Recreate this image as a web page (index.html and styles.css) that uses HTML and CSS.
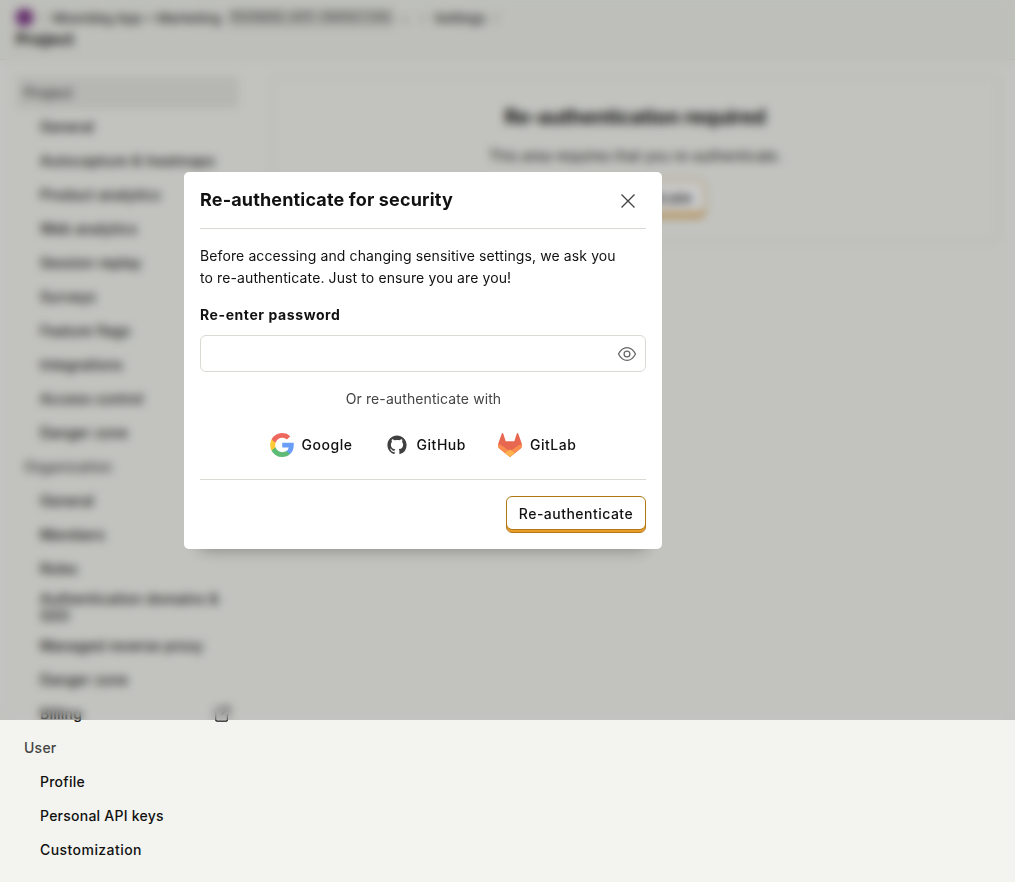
FILE: index.html
```html
<!DOCTYPE html>
<html lang="en">
<head>
<meta charset="utf-8">
<title>Settings</title>
<link rel="stylesheet" href="styles.css">
</head>
<body>
<header class="topbar">
  <div class="crumbs">
    <span class="avatar"></span><span class="sep first">/</span>
    <span class="crumb project-name">Moonbbg App + Marketing</span>
    <span class="tag">MOONBBG-APP MARKETING</span>
    <span class="chevron">⌄</span><span class="sep second">/</span>
    <span class="crumb settings">Settings</span><span class="sep">/</span>
  </div>
  <h1>Project</h1>
</header>
<div class="layout">
  <nav class="sidebar">
    <a class="group active">Project</a>
    <a>General</a><a class="wide">Autocapture &amp; heatmaps</a><a>Product analytics</a><a>Web analytics</a><a>Session replay</a><a>Surveys</a><a>Feature flags</a><a>Integrations</a><a>Access control</a><a>Danger zone</a>
    <a class="group">Organization</a>
    <a>General</a><a>Members</a><a>Roles</a><a class="tall">Authentication domains &amp; SSO</a><a>Managed reverse proxy</a><a>Danger zone</a>
    <a>Billing
      <svg class="external" viewBox="0 0 20 20" fill="none" stroke="currentColor" stroke-width="1.4"><path d="M10 4H4.500Q3 4 3 5.500V16.500Q3 18 4.500 18H14.500Q16 18 16 16.500V10M12 2.500H17.500V8M17.500 2.500L9.500 10.500"/></svg>
    </a>
    <a class="group">User</a>
    <a>Profile</a><a>Personal API keys</a><a class="wide">Customization</a>
  </nav>
  <main class="panel">
    <h2>Re-authentication required</h2>
    <p>This area requires that you re-authenticate.</p>
    <button class="button">Re-authenticate</button>
  </main>
</div>
<div class="overlay">
  <section class="modal" role="dialog" aria-labelledby="modal-title">
    <div class="modal-header">
      <h3 id="modal-title">Re-authenticate for security</h3>
      <svg class="close" viewBox="0 0 24 24" fill="none" stroke="currentColor" stroke-width="1.600"><path d="M4.200 4.200l15.600 15.600M19.800 4.200L4.200 19.800"/></svg>
    </div>
    <div class="modal-body">
      <p class="description">Before accessing and changing sensitive settings, we ask you to re-authenticate. Just to ensure you are you!</p>
      <label for="password">Re-enter password</label>
      <div class="field">
        <input id="password" type="password">
        <svg class="eye" viewBox="0 0 24 24" fill="none" stroke="currentColor" stroke-width="1.500"><path d="M1.800 12C4.200 7.200 7.600 4.300 12 4.300S19.800 7.200 22.200 12C19.800 16.800 16.400 19.700 12 19.700S4.200 16.800 1.800 12Z"/><circle cx="12" cy="12" r="3.500"/></svg>
      </div>
      <div class="or">Or re-authenticate with</div>
      <div class="providers">
        <span class="provider"><svg viewBox="0 0 24 24"><path fill="#6a9df8" d="M23.760 9.820H12.240v4.640h6.460a5.520 5.520 0 0 1-2.400 3.620v3.010h3.880c2.270-2.090 3.580-5.170 3.580-8.820 0-.850-.080-1.670 0-2.450Z"/><path fill="#5dbb76" d="M12.240 24c3.240 0 5.960-1.070 7.940-2.910l-3.880-3.010c-1.080.720-2.450 1.150-4.060 1.150-3.130 0-5.780-2.110-6.720-4.950H1.510v3.110A12 12 0 0 0 12.240 24Z"/><path fill="#fcca37" d="M5.520 14.280a7.200 7.200 0 0 1 0-4.560V6.610H1.510a12 12 0 0 0 0 10.780l4.010-3.110Z"/><path fill="#ef685d" d="M12.240 4.770c1.760 0 3.350.610 4.600 1.800l3.440-3.440A11.540 11.540 0 0 0 12.240 0 12 12 0 0 0 1.510 6.610l4.010 3.110c.940-2.840 3.590-4.950 6.720-4.950Z"/></svg>Google</span>
        <span class="provider"><svg viewBox="-2 -2 20 20"><path fill="#404040" fill-rule="evenodd" d="M8 0C3.580 0 0 3.580 0 8c0 3.540 2.290 6.530 5.470 7.590.4.070.55-.17.55-.38 0-.19-.01-.82-.01-1.490-2.010.37-2.530-.49-2.690-.94-.09-.23-.48-.94-.82-1.130-.28-.15-.68-.52-.01-.53.63-.01 1.080.58 1.230.82.72 1.210 1.870.87 2.330.66.07-.52.28-.87.51-1.070-1.780-.2-3.640-.89-3.640-3.950 0-.87.31-1.590.82-2.150-.08-.2-.36-1.020.08-2.120 0 0 .67-.21 2.200.82A7.650 7.650 0 0 1 8 3.860c.68 0 1.360.09 2 .27 1.530-1.040 2.200-.82 2.200-.82.44 1.100.16 1.920.08 2.120.51.56.82 1.270.82 2.150 0 3.070-1.870 3.750-3.650 3.950.29.25.54.73.54 1.480 0 1.070-.01 1.930-.01 2.200 0 .21.15.46.55.38A8.010 8.010 0 0 0 16 8c0-4.420-3.580-8-8-8Z"/></svg>GitHub</span>
        <span class="provider"><svg viewBox="0 0 24 24"><path fill="#e86750" d="M23.900 11 20.200.6c-.3-.8-1.100-.8-1.400 0l-2.500 7.700H7.700L5.200.6C4.900-.2 4.100-.2 3.800.6L.1 11c-.4 2 .2 3.500 1.500 4.700L12 24l10.400-8.300c1.300-1.200 1.900-2.700 1.500-4.700Z"/><path fill="#fa8c4e" d="M.1 11c-.3 2 .1 3.500 1.500 4.700L12 24l10.400-8.300c1.400-1.200 1.800-2.700 1.500-4.700-1.600.3-3 .9-4.400 1.900L12 18.300l-7.500-5.400A11 11 0 0 0 .1 11Z"/><path fill="#fdb24e" d="m12 16.500 5.100 3.400L12 24l-5.100-4.100 5.100-3.400Z"/></svg>GitLab</span>
      </div>
    </div>
    <div class="modal-footer"><button class="button">Re-authenticate</button></div>
  </section>
</div>
</body>
</html>
```
FILE: styles.css
```css
* { box-sizing: border-box; }
html { height: 882px; overflow: hidden; }
body { margin: 0; height: 882px; overflow: hidden; background: #f3f4ef; color: #111; font: 14px/20px Inter, sans-serif; }
h1, h2, h3, p { margin: 0; }
.topbar { height: 60px; padding: 7px 16px 0; background: #eeefe9; border-bottom: 1px solid #dadbd2; }
.crumbs { display: flex; align-items: center; height: 21px; font-size: 13px; font-weight: 600; color: #444; white-space: nowrap; }
.avatar { width: 17px; height: 17px; border-radius: 6px; background: #7e3c88; }
.sep { color: #888; font-weight: 400; }
.first { margin-left: 8px; }
.crumb { font-size: 13px; }
.project-name { width: 169px; margin-left: 7px; }
.tag { width: 166px; height: 18px; margin-left: 6px; padding: 0 3px; overflow: hidden; border-radius: 3px; background: #d2d3cd; color: #666; font: 500 12px/18px "Liberation Mono", monospace; letter-spacing: .4px; }
.chevron { margin-left: 7px; font-size: 10px; }
.second { margin-left: 12px; }
.settings { margin: 0 8px 0 9px; }
h1 { font-size: 16px; line-height: 22px; font-weight: 700; letter-spacing: .35px; }
.layout { display: flex; align-items: flex-start; gap: 32px; padding: 16px; }
.sidebar { display: flex; flex-direction: column; flex: 0 0 223px; gap: 1px; letter-spacing: .24px; }
.sidebar a { display: flex; align-items: center; justify-content: space-between; min-height: 33px; padding: 0 8px 0 24px; border-radius: 4px; font-weight: 500; }
.sidebar .wide { letter-spacing: .44px; }
.sidebar .group { padding-left: 8px; color: #444; }
.sidebar .active { background: #e4e5e0; }
.sidebar .tall { min-height: 42px; padding-right: 0; line-height: 17px; letter-spacing: .3px; }
.external { width: 18px; height: 18px; }
.panel { display: flex; flex: 1; flex-direction: column; align-items: center; height: 166px; padding: 26px 0; border: 1px solid #dadbd2; border-radius: 6px; }
h2 { font-size: 20px; line-height: 28px; font-weight: 700; letter-spacing: -.08px; }
.panel p { margin: 15px 0 14px; letter-spacing: .15px; }
.button { flex-shrink: 0; width: 140px; height: 37px; padding: 0 0 2px; border: 1px solid #b17816; border-radius: 6px; background: #fff; box-shadow: inset 0 -2px #eb9d2a, inset 0 -3px #b17816; color: #111; font: 500 14px/20px Inter, sans-serif; letter-spacing: .48px; }
.overlay { position: fixed; inset: 0 0 auto; height: 720px; background: rgb(0 0 0 / 20%); backdrop-filter: blur(5px); }
.modal { position: absolute; top: 172px; left: 184px; width: 478px; height: 377px; padding: 0 16px; border-radius: 5px; background: #fff; box-shadow: 0 16px 16px -16px rgb(0 0 0 / 35%); }
.modal-header { display: flex; justify-content: space-between; align-items: center; height: 57px; padding-right: 8px; border-bottom: 1px solid #d9dad3; }
h3 { font-size: 18px; line-height: 24px; font-weight: 700; letter-spacing: .16px; }
.close { width: 20px; height: 20px; margin-top: 2px; color: #444; }
.modal-body { height: 250px; padding-top: 16px; }
.description { width: 430px; line-height: 22px; letter-spacing: .11px; }
label { display: block; margin: 16px 0 10px; font-weight: 700; line-height: 20px; letter-spacing: .58px; }
.field { display: flex; align-items: center; height: 37px; padding-right: 8px; border: 1px solid #d9dad3; border-radius: 6px; }
.field input { min-width: 0; flex: 1; border: 0; outline: 0; background: transparent; }
.eye { width: 20px; height: 20px; margin-top: 1px; color: #666; }
.or { margin-top: 17px; padding-left: 1px; text-align: center; color: #444; letter-spacing: .1px; }
.providers { display: flex; justify-content: center; gap: 32px; margin-top: 24px; }
.provider { display: flex; align-items: center; gap: 8px; height: 24px; font-weight: 500; letter-spacing: .52px; }
.provider svg { width: 24px; height: 24px; }
.modal-footer { display: flex; justify-content: flex-end; padding-top: 16px; border-top: 1px solid #d9dad3; }
```
